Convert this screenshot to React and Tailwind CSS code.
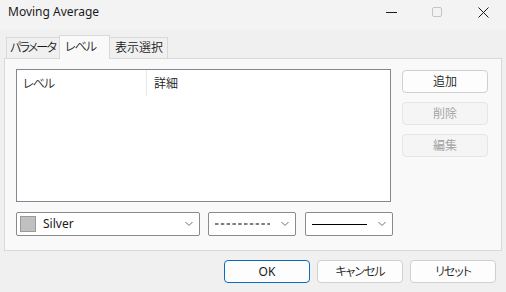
import React from 'react';

const font = { fontFamily: '"Segoe UI", "Noto Sans", "Noto Sans CJK JP", sans-serif' };

const Jp = ({ children, className = '' }) => (
  <span className={`font-[350] whitespace-nowrap [font-feature-settings:"palt"] ${className}`}>{children}</span>
);

const Chevron = () => (
  <svg width="10" height="6" viewBox="0 0 10 6" className="shrink-0">
    <path d="M1.5 1 L5 4.5 L8.5 1" fill="none" stroke="#707070" strokeWidth="1" />
  </svg>
);

const DlgButton = ({ children, disabled, primary }) => (
  <div
    className={`flex items-center justify-center h-[23px] w-[86px] rounded-[4px] border text-[12px] ${
      disabled
        ? 'bg-[#f5f5f5] border-[#e5e5e5] text-[#a0a0a0]'
        : primary
          ? 'bg-[#fdfdfd] border-[#0f6cbd] text-[#1a1a1a]'
          : 'bg-[#fdfdfd] border-[#d0d0d0] text-[#1a1a1a]'
    }`}
  >
    {children}
  </div>
);

const App = () => {
  return (
    <div className="w-[506px] h-[292px] bg-[#f0f0f0] overflow-hidden text-[#1a1a1a]" style={font}>
      {/* Title bar */}
      <div className="h-[30px] bg-[#f3f3f3] flex items-center pl-[8px]">
        <span className="text-[12px] flex-1 -mt-[6px]">Moving Average</span>
        <div className="flex items-center h-full -mt-[6px]">
          <div className="w-[46px] flex justify-center">
            <div className="w-[11px] h-px bg-[#1a1a1a]" />
          </div>
          <div className="w-[46px] flex justify-center">
            <div className="w-[10px] h-[10px] border border-[#c4c4c4] rounded-[2px]" />
          </div>
          <div className="w-[46px] flex justify-center">
            <svg width="11" height="11" viewBox="0 0 11 11">
              <path d="M0.5 0.5 L10.5 10.5 M10.5 0.5 L0.5 10.5" stroke="#1a1a1a" strokeWidth="1" />
            </svg>
          </div>
        </div>
      </div>

      {/* Tabs */}
      <div className="flex items-end pl-[6px] h-[24px] mt-[4px]">
        <div className="h-[21px] w-[53px] pl-[3px] flex items-center text-[12px] border border-b-0 border-r-0 border-[#d9d9d9] bg-[#f0f0f0] overflow-hidden">
          <Jp className="tracking-[-1.8px]">パラメータ</Jp>
        </div>
        <div className="h-[24px] w-[51px] pl-[5px] flex items-start pt-[2px] text-[12px] border border-b-0 border-[#d9d9d9] bg-[#f9f9f9] relative top-px z-10">
          <Jp className="tracking-[-1px]">レベル</Jp>
        </div>
        <div className="h-[21px] w-[58px] pl-[5px] flex items-center text-[12px] border border-b-0 border-l-0 border-[#d9d9d9] bg-[#f0f0f0]">
          <Jp>表示選択</Jp>
        </div>
      </div>

      {/* Panel */}
      <div className="ml-[4px] w-[498px] h-[193px] border border-[#d9d9d9] bg-[#f9f9f9] pt-[10px] pl-[11px]">
        <div className="flex">
          <div className="w-[375px] h-[133px] border border-[#828790] bg-white">
            <div className="flex h-[26px] text-[12px]">
              <div className="w-[130px] pl-[6px] pt-[5px] border-r border-[#e8e8e8]">
                <Jp className="tracking-[-1px]">レベル</Jp>
              </div>
              <div className="pl-[7px] pt-[5px]">
                <Jp>詳細</Jp>
              </div>
            </div>
          </div>
          <div className="ml-[11px] pt-px flex flex-col gap-[9px]">
            <DlgButton><Jp>追加</Jp></DlgButton>
            <DlgButton disabled><Jp>削除</Jp></DlgButton>
            <DlgButton disabled><Jp>編集</Jp></DlgButton>
          </div>
        </div>

        <div className="flex mt-[10px] gap-[8px]">
          <div className="w-[184px] h-[24px] border border-[#8a8a8a] bg-white rounded-[2px] flex items-center pl-[3px] pr-[5px]">
            <div className="w-[16px] h-[16px] bg-[#c0c0c0] border border-[#9a9a9a]" />
            <span className="ml-[7px] text-[12px] flex-1">Silver</span>
            <Chevron />
          </div>
          <div className="w-[88px] h-[24px] border border-[#8a8a8a] bg-white rounded-[2px] flex items-center pl-[6px] pr-[5px]">
            <svg height="2" className="flex-1 mr-[10px]">
              <line x1="0" y1="1" x2="100%" y2="1" stroke="#000" strokeWidth="1" strokeDasharray="3.5 2.3" />
            </svg>
            <Chevron />
          </div>
          <div className="w-[88px] h-[24px] border border-[#8a8a8a] bg-white rounded-[2px] flex items-center pl-[6px] pr-[5px] ml-px">
            <div className="flex-1 h-px bg-black mr-[10px]" />
            <Chevron />
          </div>
        </div>
      </div>

      {/* Bottom buttons */}
      <div className="flex justify-end gap-[7px] pr-[10px] mt-[9px]">
        <DlgButton primary>OK</DlgButton>
        <DlgButton><Jp className="tracking-[-1px]">キャンセル</Jp></DlgButton>
        <DlgButton><Jp className="tracking-[-1px]">リセット</Jp></DlgButton>
      </div>
    </div>
  );
};

export default App;
